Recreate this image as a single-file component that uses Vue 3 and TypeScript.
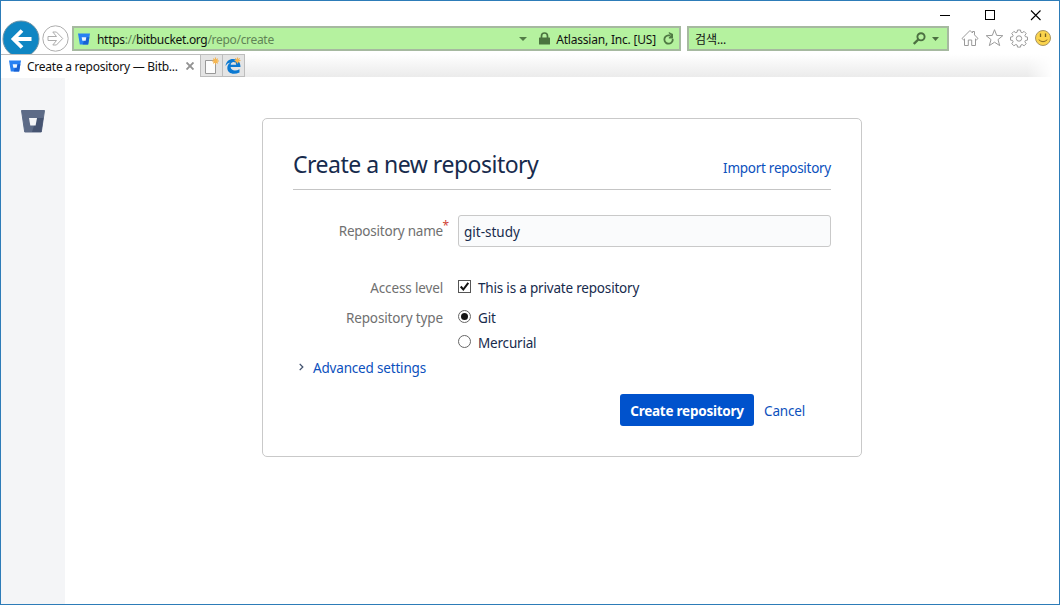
<script setup lang="ts">
import { ref } from 'vue'

const repositoryName = ref('git-study')
const isPrivate = ref(true)
const repositoryType = ref<'git' | 'hg'>('git')
const types: { id: 'git' | 'hg'; label: string }[] = [
  { id: 'git', label: 'Git' },
  { id: 'hg', label: 'Mercurial' },
]
</script>

<template>
  <div class="window">
    <header class="titlebar">
      <svg class="controls" width="110" height="24" viewBox="0 0 110 24" fill="none" stroke="#000">
        <path d="M0 14.5h10" />
        <rect x="45.500" y="9.500" width="9" height="9" />
        <path d="M91 9.500l9.500 9.500M100.500 9.500l-9.500 9.500" stroke-width="1.100" />
      </svg>
    </header>

    <div class="toolbar">
      <div class="back">
        <svg width="38" height="38" viewBox="0 0 38 38">
          <circle cx="19" cy="19" r="18" fill="#0f86c3" stroke="#6f93a5" />
          <path d="M29.500 19H12M20 10.500L11.500 19l8.500 8.500" fill="none" stroke="#fff" stroke-width="3.800" />
        </svg>
      </div>
      <svg class="forward" width="27" height="27" viewBox="0 0 27 27" fill="#fff" stroke="#adadad">
        <circle cx="13.500" cy="13.500" r="12.700" />
        <path d="M6 11.500h8.500l-3.700-4.500h3.600l6.300 6.500-6.300 6.500h-3.600l3.700-4.500H6z" />
      </svg>
      <div class="field address">
        <svg class="site" width="12" height="12" viewBox="0 0 13 12">
          <path d="M0 0h13l-2 12H2z" fill="#2780f3" /><path d="M8 4h4.300L11 12H5z" fill="#1861d2" />
          <path d="M4 4h5l-.7 4H4.700z" fill="#eef6ff" />
        </svg>
        <span class="url">https<i>://</i>bitbucket.org<i>/repo/create</i></span>
        <svg class="drop" width="8" height="4" viewBox="0 0 8 4"><path d="M0 0h8L4 4z" fill="#527d46" /></svg>
        <svg class="lock" width="11" height="13" viewBox="0 0 11 13">
          <path d="M2.500 6V4a3 3 0 0 1 6 0v2" fill="none" stroke="#4b743f" stroke-width="1.700" />
          <rect x="0" y="5.500" width="11" height="7" rx=".6" fill="#4b743f" />
        </svg>
        <span class="identity">Atlassian, Inc. [US]</span>
        <svg class="reload" width="12" height="13" viewBox="0 0 12 13">
          <path d="M9.700 6.800A4.200 4.200 0 1 1 5.500 3.300h2" fill="none" stroke="#4f7943" stroke-width="1.800" />
          <path d="M5.800 0v1.200L8 3.300 5.800 5.400V6.600H10V2z" fill="#4f7943" />
        </svg>
      </div>
      <div class="field search">
        <span class="hint">검색...</span>
        <svg class="lens" width="13" height="13" viewBox="0 0 13 13" fill="none" stroke="#4c7041">
          <circle cx="8" cy="4.800" r="3.600" stroke-width="1.900" /><path d="M5.300 7.500L.8 12" stroke-width="2.400" />
        </svg>
        <svg width="7" height="4" viewBox="0 0 7 4"><path d="M0 0h7L3.500 4z" fill="#4c7041" /></svg>
      </div>
      <svg class="tools" width="92" height="20" viewBox="0 0 92 20" fill="#fff" stroke="#9a9a9a">
        <path d="M1 10.500L9 2.500l2.500 2.500V3.500h2v3.400l3.500 3.600-1.500 1.300-1-.9v6.600h-3.800v-5.500H7.300v5.500H3.500v-6.600l-1 .9z" />
        <path d="M33.500 1.700l2.200 5.700 6.100.3-4.800 3.900 1.700 6-5.200-3.400-5.200 3.400 1.700-6-4.800-3.900 6.100-.3z" />
        <path d="M56.500 2h3l.4 2.200 1.300.5 1.900-1.300 2.100 2.100-1.300 1.900.5 1.300 2.100.4v3l-2.100.4-.5 1.300 1.300 1.900-2.100 2.100-1.900-1.300-1.300.5-.4 2.100h-3l-.4-2.100-1.300-.5-1.900 1.300-2.100-2.100 1.300-1.900-.5-1.300-2.100-.4v-3l2.100-.4.5-1.300-1.300-1.900 2.100-2.100 1.900 1.300 1.300-.5z" />
        <circle cx="58" cy="10.500" r="2.700" />
        <circle cx="82" cy="10" r="7.500" fill="#fbd44d" stroke="#a99663" />
        <path d="M79.500 5.500v3.500M84.500 5.500v3.500" stroke="#756024" stroke-width="1.300" />
        <path d="M77.700 11.700q4.300 4 8.600 0" fill="none" stroke="#8c6c22" />
      </svg>
    </div>

    <div class="tabs">
      <div class="tab">
        <svg width="12" height="12" viewBox="0 0 13 12">
          <path d="M0 0h13l-2 12H2z" fill="#2780f3" /><path d="M8 4h4.300L11 12H5z" fill="#1861d2" />
          <path d="M4 4h5l-.7 4H4.700z" fill="#eef6ff" />
        </svg>
        <span class="tab-title">Create a repository — Bitb...</span>
        <svg class="close" width="8" height="8" viewBox="0 0 8 8"><path d="M.5.5l7 7M7.500.5l-7 7" stroke="#929292" stroke-width="1.900" /></svg>
      </div>
      <div class="tab-button">
        <svg width="16" height="18" viewBox="0 0 16 18">
          <path d="M1.500 3.500h10v13h-10z" fill="#fcfcfc" stroke="#999" />
          <path d="M11.500 .5v7M8 4h7M9.200 1.700l4.600 4.600M13.800 1.700L9.200 6.300" stroke="#f0b250" stroke-width="1.100" />
          <circle cx="11.500" cy="4" r="2.100" fill="#f7b750" />
        </svg>
      </div>
      <div class="tab-button">
        <svg width="17" height="18" viewBox="0 0 17 18">
          <path d="M.5 9C1.200 4.300 4 2 8 2c5 0 7.500 3.200 7.500 8H5.600c.2 3.800 5.100 4.300 8.900 2.200v3.200C8.500 18.200 2.400 16.500 2.300 11c0-2.600 1.200-4.300 3.200-5.500C3.500 5.800 1.700 7 .5 9zM5.700 7.700h5.500c-.2-3.600-5.200-3.400-5.500 0z" fill="#0b79d2" />
          <path d="M12.500 .5v6M9.500 3.500h6M10.300 1.300l4.400 4.400M14.700 1.300l-4.400 4.400" stroke="#efb256" stroke-width="1.100" />
          <circle cx="12.500" cy="3.500" r="1.800" fill="#f5b552" />
        </svg>
      </div>
      <div class="strip"></div>
    </div>

    <div class="page">
      <aside class="sidebar">
        <svg width="24" height="23" viewBox="0 0 24 23">
          <path d="M.5.500h23L20.300 22H3.700z" fill="#5d6b87" stroke="#5d6b87" stroke-linejoin="round" />
          <path d="M15.500 8h6.900l-2.100 14H11z" fill="#465471" />
          <path d="M8 8h8l-1.400 7.500H9.300z" fill="#f4f5f7" />
        </svg>
      </aside>
      <main class="content">
        <form class="card" @submit.prevent>
          <div class="card-head">
            <h1>Create a new repository</h1>
            <a class="import">Import repository</a>
          </div>
          <div class="row name-row">
            <label class="label" for="name"><span class="name-label">Repository name</span><b class="required">*</b></label>
            <input id="name" v-model="repositoryName" class="input" type="text" spellcheck="false" />
          </div>
          <div class="row access-row">
            <span class="label access-label">Access level</span>
            <label class="option">
              <input v-model="isPrivate" type="checkbox" class="native" />
              <svg width="13" height="13" viewBox="0 0 13 13">
                <rect x=".5" y=".5" width="12" height="12" fill="#fff" stroke="#555" />
                <path v-if="isPrivate" d="M2.700 6.500l2.600 3 5-6.700" fill="none" stroke="#111" stroke-width="2" />
              </svg>
              <span class="private">This is a private repository</span>
            </label>
          </div>
          <div class="row type-row">
            <span class="label type-label">Repository type</span>
            <div class="options">
              <label v-for="type in types" :key="type.id" class="option">
                <input v-model="repositoryType" type="radio" class="native" :value="type.id" />
                <svg width="13" height="13" viewBox="0 0 13 13">
                  <circle cx="6.500" cy="6.500" r="6" fill="#fff" stroke="#666" />
                  <circle v-if="repositoryType === type.id" cx="6.500" cy="6.500" r="3.500" fill="#151515" />
                </svg>
                <span>{{ type.label }}</span>
              </label>
            </div>
          </div>
          <div class="advanced">
            <svg width="5" height="8" viewBox="0 0 5 8"><path d="M.7.900L3.800 4 .7 7.100" fill="none" stroke="#42526e" stroke-width="1.300" /></svg>
            <a>Advanced settings</a>
          </div>
          <div class="actions">
            <button type="submit"><span>Create repository</span></button>
            <a class="cancel">Cancel</a>
          </div>
        </form>
      </main>
    </div>
  </div>
</template>

<style>
body {
  overflow: hidden;
  background: #fff;
}
</style>

<style scoped>
* { box-sizing: border-box; }
.window {
  width: 1060px;
  height: 605px;
  border: 1px solid #2d7cb8;
  background: #fff;
  display: flex;
  flex-direction: column;
  font-family: "Noto Sans", "Noto Sans CJK KR", sans-serif;
  font-size: 13.5px;
  color: #172b4d;
}
svg { display: block; flex: none; }
span, a, h1 { white-space: nowrap; }
.titlebar {
  height: 24px;
  flex: none;
  display: flex;
  justify-content: flex-end;
  padding-right: 9px;
}
.toolbar {
  height: 29px;
  flex: none;
  display: flex;
  align-items: flex-start;
}
.back {
  width: 38px;
  height: 34px;
  margin: -5px 0 0 1px;
  overflow: hidden;
}
.forward { margin-left: 2px; }
.field {
  height: 25px;
  margin-top: 1px;
  border: 2px solid #a6b9a0;
  background: #b5f29f;
  display: flex;
  align-items: center;
  font-size: 12px;
  color: #111;
}
.address { width: 609px; margin-left: 3px; padding: 0 4px; }
.url { margin-left: 7px; padding-top: 1px; flex: 1; letter-spacing: -0.31px; }
.url i { font-style: normal; color: #608456; }
.lock { margin-left: 12px; }
.identity { margin-left: 6px; padding-top: 1px; letter-spacing: -0.2px; }
.reload { margin-left: 7px; }
.search { width: 262px; margin-left: 6px; padding: 0 8px 0 6px; }
.hint { flex: 1; padding-top: 1px; letter-spacing: -0.1px; }
.lens { margin-right: 6px; }
.tools { margin: 3px 0 0 12px; }
.tabs { height: 23px; flex: none; display: flex; }
.tab {
  width: 200px;
  border: 1px solid #bdbdbd;
  border-bottom: 0;
  border-left: 0;
  display: flex;
  align-items: center;
  padding-left: 8px;
  font-size: 12px;
  color: #111;
}
.tab-title { margin-left: 6px; flex: 1; letter-spacing: -0.25px; }
.close { margin-right: 6px; }
.tab-button {
  width: 22px;
  border: 1px solid #bdbdbd;
  border-left: 0;
  background: #e4e4e4;
  display: flex;
  align-items: center;
  justify-content: center;
}
.strip {
  flex: 1;
  margin-right: 6px;
  background: linear-gradient(#fff, #ebebeb);
  -webkit-mask-image: linear-gradient(90deg, #000 calc(100% - 26px), transparent);
  mask-image: linear-gradient(90deg, #000 calc(100% - 26px), transparent);
}
.page { flex: 1; display: flex; margin-top: 1px; }
.sidebar { width: 64px; background: #f4f5f7; padding: 32px 0 0 20px; }
.content { flex: 1; padding: 40px 0 0 197px; }
.card {
  width: 600px;
  height: 339px;
  border: 1px solid #c9c9c9;
  border-radius: 5px;
  padding: 0 30px;
}
.card-head {
  height: 71px;
  border-bottom: 1px solid #c5c5c5;
  display: flex;
  justify-content: space-between;
}
h1 { margin: 28px 0 0; font-size: 23px; line-height: 34px; font-weight: 400; letter-spacing: -0.5px; }
a { color: #0b50bd; letter-spacing: -0.18px; }
.import { margin-top: 39px; line-height: 20px; letter-spacing: -0.27px; }
.row { display: flex; }
.label { width: 150px; margin-right: 15px; color: #707070; text-align: right; line-height: 20px; }
.access-label, .type-label { letter-spacing: -0.14px; }
.name-label { letter-spacing: -0.22px; }
.name-row { margin-top: 25px; align-items: flex-start; }
.name-row .label { margin-top: 6px; position: relative; }
.required { position: absolute; right: -6px; top: -5px; font-size: 12px; font-weight: 400; color: #d04437; }
.input {
  width: 373px;
  height: 32px;
  border: 1px solid #c9c9c9;
  border-radius: 3px;
  background: #fafbfc;
  padding: 2px 5px 0;
  font: inherit;
  color: inherit;
  outline: 0;
}
.access-row { margin-top: 31px; height: 30px; }
.option { display: flex; height: 20px; line-height: 20px; letter-spacing: -0.19px; }
.option svg { margin: 2px 7px 0 0; }
.native { position: absolute; opacity: 0; pointer-events: none; }
.type-row { height: 50px; }
.options { display: flex; flex-direction: column; gap: 5px; }
.advanced { height: 20px; line-height: 20px; display: flex; padding-left: 6px; gap: 9px; }
.advanced svg { margin-top: 5px; }
.actions { display: flex; justify-content: flex-end; align-items: center; height: 32px; margin-top: 16px; padding-right: 26px; gap: 10px; }
button {
  width: 134px;
  height: 32px;
  border: 0;
  border-radius: 3px;
  background: #0052cc;
  color: #fff;
  padding: 2px 0 0;
  font: 700 13.500px "Noto Sans", sans-serif;
  letter-spacing: -0.24px;
}
.cancel { padding-top: 2px; }
</style>
